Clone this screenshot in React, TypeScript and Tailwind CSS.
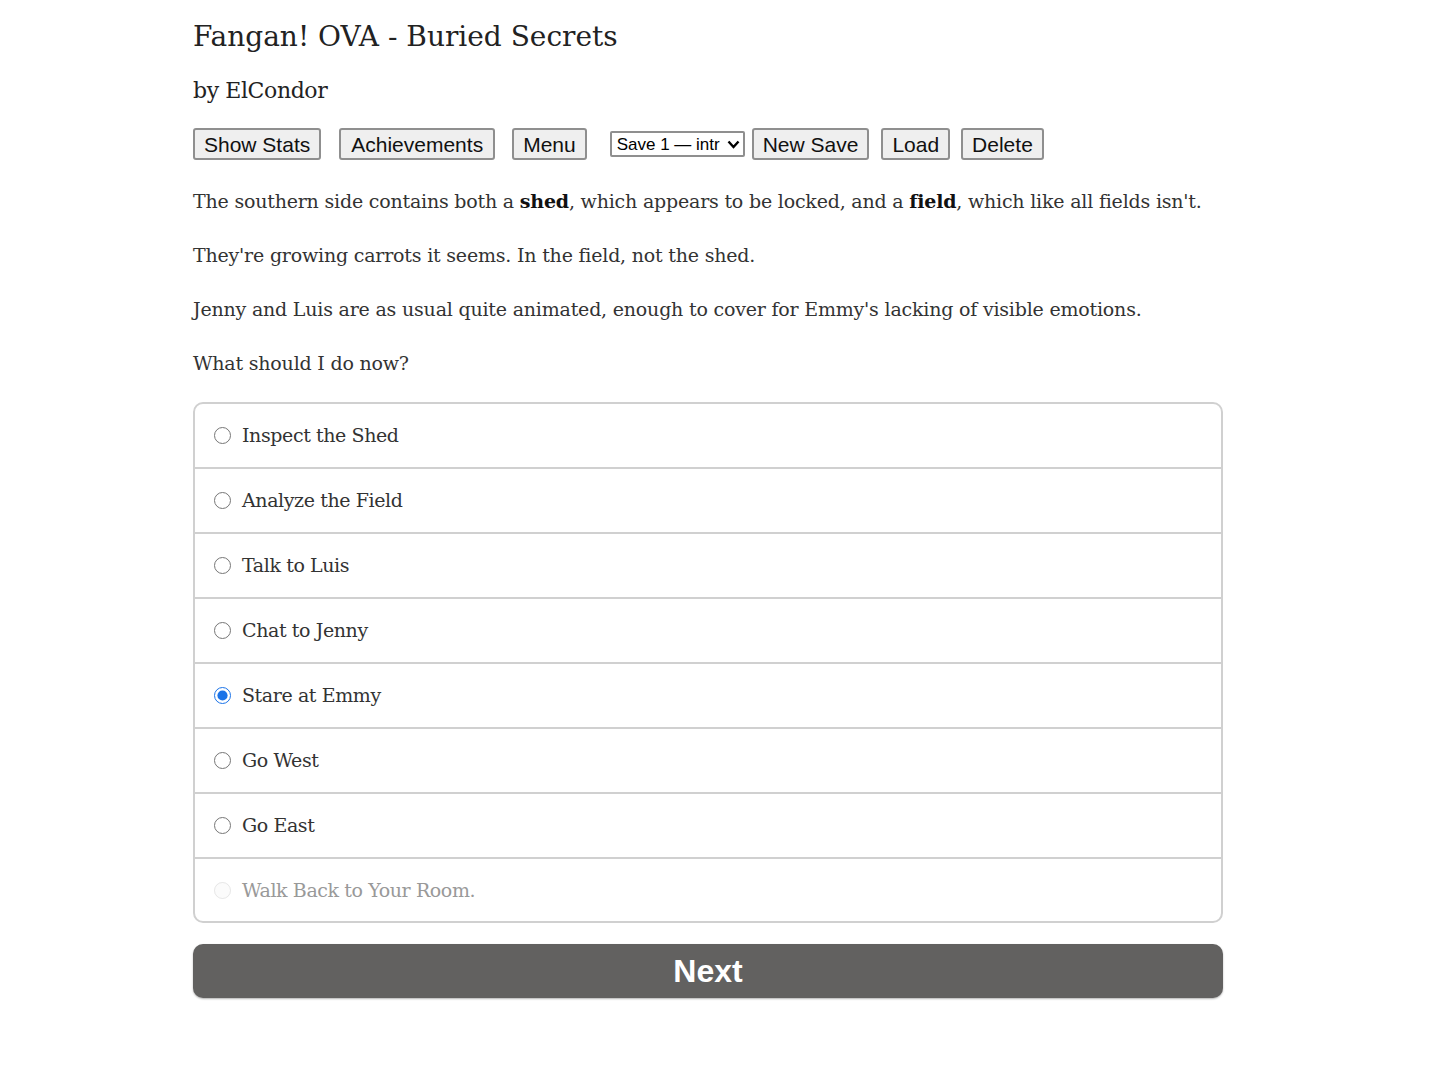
import { useState } from 'react';

const choices = [
  'Inspect the Shed',
  'Analyze the Field',
  'Talk to Luis',
  'Chat to Jenny',
  'Stare at Emmy',
  'Go West',
  'Go East',
];

const serif = "font-['Georgia','DejaVu_Serif',serif]";
const sans = "font-['Liberation_Sans',Arial,sans-serif]";

function ToolButton({ label, className = 'px-[9px]' }: { label: string; className?: string }) {
  return (
    <button
      className={`h-[32px] ${sans} text-[21px] leading-none text-[#111] bg-[#efefef] border-2 border-[#8f8f8f] rounded-[3px] ${className}`}
    >
      {label}
    </button>
  );
}

export default function App() {
  const [selected, setSelected] = useState(4);

  return (
    <div className="min-h-[1080px] bg-white">
      <div className={`ml-[193px] w-[1030px] pt-[15px] text-[#333] ${serif}`}>
        <h1 className="text-[28px] leading-[44px] tracking-[0px] text-[#222]">Fangan! OVA - Buried Secrets</h1>
        <h2 className="mt-[17px] text-[22px] leading-[30px] tracking-[-0.4px] text-[#222]">by ElCondor</h2>

        <div className="mt-[22px] flex items-center">
          <ToolButton label="Show Stats" />
          <ToolButton label="Achievements" className="ml-[18px] px-[10px]" />
          <ToolButton label="Menu" className="ml-[17px] px-[9px]" />
          <div
            className={`ml-[23px] h-[26px] w-[135px] flex items-center justify-between pl-[5px] pr-[3px] border-2 border-[#8f8f8f] rounded-[2px] bg-white ${sans} text-[17px] leading-none text-black`}
          >
            <span className="whitespace-nowrap overflow-hidden">Save 1 — intr</span>
            <svg width="13" height="9" viewBox="0 0 13 9" className="shrink-0">
              <path d="M1.5 1.5 L6.5 7 L11.5 1.5" fill="none" stroke="#000" strokeWidth="2.4" />
            </svg>
          </div>
          <ToolButton label="New Save" className="ml-[7px] px-[9px]" />
          <ToolButton label="Load" className="ml-[12px] px-[9px]" />
          <ToolButton label="Delete" className="ml-[11px] px-[9px]" />
        </div>

        <div className="mt-[27px] text-[19px] leading-[28px] tracking-[-0.2px] space-y-[26px]">
          <p className="whitespace-nowrap">
            The southern side contains both a <b className="text-[#111]">shed</b>, which appears to be locked, and a{' '}
            <b className="text-[#111]">field</b>, which like all fields isn't.
          </p>
          <p>They're growing carrots it seems. In the field, not the shed.</p>
          <p>Jenny and Luis are as usual quite animated, enough to cover for Emmy's lacking of visible emotions.</p>
          <p>What should I do now?</p>
        </div>

        <div className="mt-[25px] border-2 border-[#d0d0d0] rounded-[10px] overflow-hidden">
          {choices.map((c, i) => (
            <label
              key={c}
              className="h-[65px] flex items-center pl-[19px] border-b-2 border-[#d0d0d0] text-[19px] tracking-[-0.4px] text-[#333] cursor-pointer"
            >
              <input
                type="radio"
                name="choice"
                checked={selected === i}
                onChange={() => setSelected(i)}
                className="w-[17px] h-[17px] m-0 mr-[11px] accent-[#1a73e8]"
              />
              {c}
            </label>
          ))}
          <label className="h-[62px] flex items-center pl-[19px] text-[19px] tracking-[-0.4px] text-[#999]">
            <input type="radio" name="choice" disabled className="w-[17px] h-[17px] m-0 mr-[11px] opacity-50" />
            Walk Back to Your Room.
          </label>
        </div>

        <button
          className={`mt-[21px] w-full h-[54px] rounded-[10px] bg-[#626160] text-white text-[32px] font-bold ${sans} shadow-[0_1px_2px_rgba(0,0,0,0.3)]`}
        >
          Next
        </button>
      </div>
    </div>
  );
}
